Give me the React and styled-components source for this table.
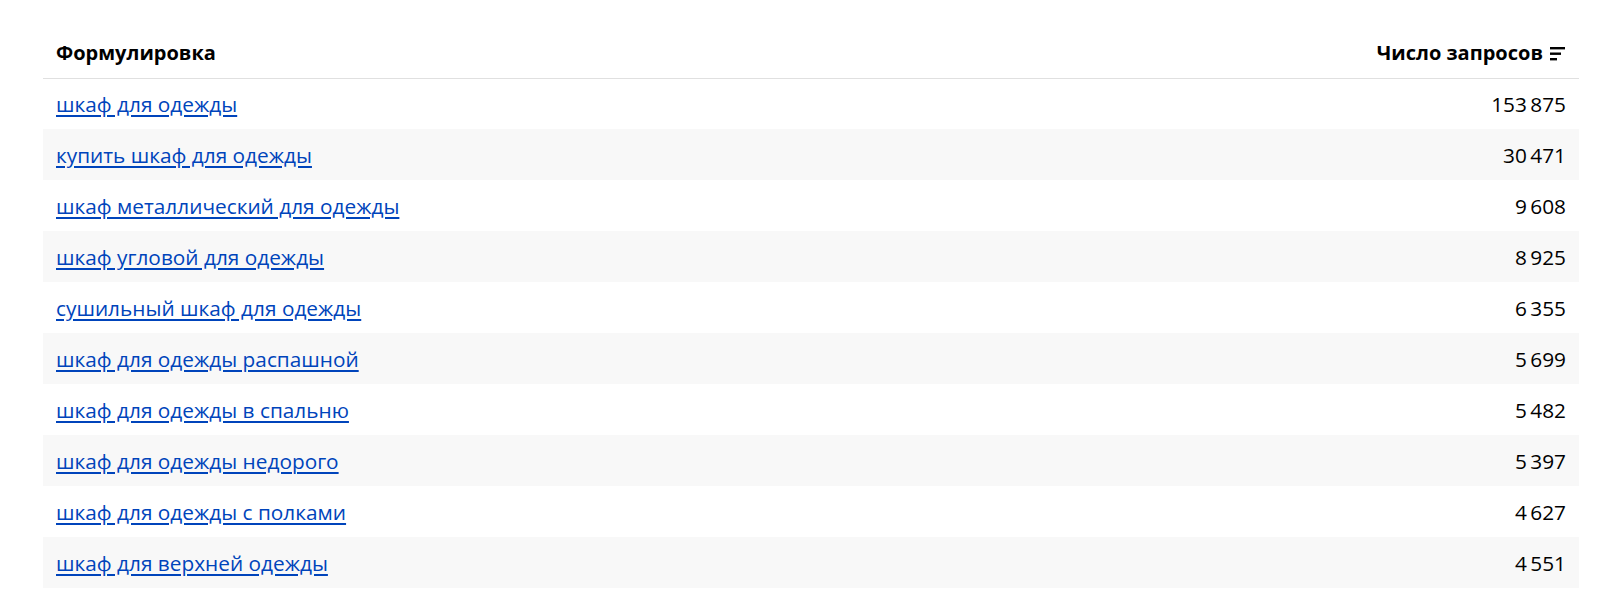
import styled, { createGlobalStyle } from "styled-components";

const GlobalStyle = createGlobalStyle`
  body {
    margin: 0;
    background: #ffffff;
    font-family: "Open Sans", "Noto Sans", sans-serif;
  }
`;

const rows = [
    { phrase: "шкаф для одежды", count: "153\u2009875" },
    { phrase: "купить шкаф для одежды", count: "30\u2009471" },
    { phrase: "шкаф металлический для одежды", count: "9\u2009608" },
    { phrase: "шкаф угловой для одежды", count: "8\u2009925" },
    { phrase: "сушильный шкаф для одежды", count: "6\u2009355" },
    { phrase: "шкаф для одежды распашной", count: "5\u2009699" },
    { phrase: "шкаф для одежды в спальню", count: "5\u2009482" },
    { phrase: "шкаф для одежды недорого", count: "5\u2009397" },
    { phrase: "шкаф для одежды с полками", count: "4\u2009627" },
    { phrase: "шкаф для верхней одежды", count: "4\u2009551" },
];

function SortIcon() {
    return (
        <svg width="16" height="15" viewBox="0 0 16 15">
            <rect x="0" y="1" width="15" height="2.4" fill="#000" />
            <rect x="0" y="6.5" width="11" height="2.4" fill="#000" />
            <rect x="0" y="12" width="7" height="2.4" fill="#000" />
        </svg>
    );
}

export default function App() {
    return (
        <>
            <GlobalStyle />
            <Page>
                <Table>
                    <thead>
                        <tr>
                            <HeadCell>Формулировка</HeadCell>
                            <HeadCell $right>
                                <SortLabel>
                                    Число запросов
                                    <SortIcon />
                                </SortLabel>
                            </HeadCell>
                        </tr>
                    </thead>
                    <tbody>
                        {rows.map((r, i) => (
                            <Row key={r.phrase} $striped={i % 2 === 1}>
                                <Cell>
                                    <PhraseLink href="#">{r.phrase}</PhraseLink>
                                </Cell>
                                <Cell $right>{r.count}</Cell>
                            </Row>
                        ))}
                    </tbody>
                </Table>
            </Page>
        </>
    );
}

const Page = styled.div`
  padding: 0 29px 0 43px;
`;

const Table = styled.table`
  width: 100%;
  border-collapse: collapse;
  border-spacing: 0;
`;

const HeadCell = styled.th`
  height: 78px;
  padding: 28px 13px 0;
  box-sizing: border-box;
  text-align: ${(p) => (p.$right ? "right" : "left")};
  font-size: 20px;
  font-weight: 700;
  color: #000;
  border-bottom: 1px solid #e0e0e0;
  vertical-align: middle;
`;

const SortLabel = styled.span`
  display: inline-flex;
  align-items: center;
  gap: 7px;
  svg {
    margin-top: 1px;
  }
`;

const Row = styled.tr`
  height: 51px;
  background: ${(p) => (p.$striped ? "#f8f8f8" : "#ffffff")};
`;

const Cell = styled.td`
  padding: 0 13px;
  text-align: ${(p) => (p.$right ? "right" : "left")};
  font-size: 20.8px;
  color: #000;
  vertical-align: middle;
`;

const PhraseLink = styled.a`
  color: #0044bb;
  text-decoration: underline;
  text-underline-offset: 3px;
`;
